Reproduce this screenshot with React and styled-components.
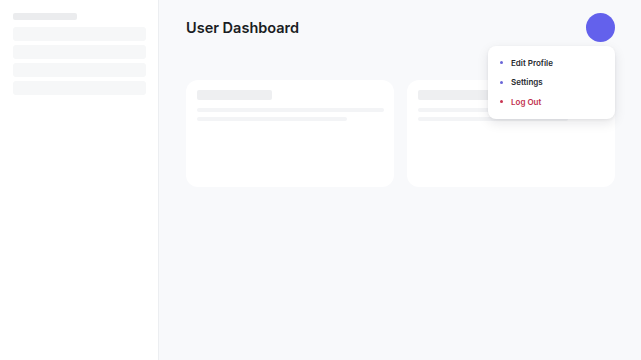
import React, { useState } from 'react';
import styled, { createGlobalStyle } from 'styled-components';

const GlobalStyle = createGlobalStyle`
  html, body {
    margin: 0;
    padding: 0;
    height: 100%;
  }
  body {
    font-family: Inter, "Noto Sans", sans-serif;
    background: #f8f9fb;
    color: #111827;
  }
  #root {
    height: 100%;
  }
`;

const Layout = styled.div`
  display: flex;
  height: 360px;
  width: 641px;
`;

const Sidebar = styled.aside`
  width: 159px;
  flex-shrink: 0;
  background: #ffffff;
  border-right: 1px solid #eceef1;
  padding: 13px 13px 0 13px;
  box-sizing: border-box;
  display: flex;
  flex-direction: column;
`;

const SkeletonBar = styled.div`
  width: ${(p) => p.$w || '100%'};
  height: ${(p) => p.$h || 14}px;
  background: ${(p) => p.$bg || '#f7f7f8'};
  border-radius: ${(p) => p.$r || 2}px;
  margin-bottom: ${(p) => p.$mb || 0}px;
`;

const NavList = styled.div`
  display: flex;
  flex-direction: column;
  gap: 4px;
  padding-top: 7px;
  width: 133px;
`;

const Main = styled.main`
  flex: 1;
  padding: 13px 26px 0 27px;
  box-sizing: border-box;
`;

const Header = styled.header`
  display: flex;
  align-items: center;
  justify-content: space-between;
  height: 29px;
`;

const Title = styled.h1`
  margin: 0;
  font-size: 14.5px;
  font-weight: 600;
  color: #1a1d23;
`;

const AvatarWrap = styled.div`
  position: relative;
`;

const Avatar = styled.button`
  width: 29px;
  height: 29px;
  border-radius: 50%;
  border: none;
  padding: 0;
  background: #6361ec;
  cursor: pointer;
  display: block;
`;

const Menu = styled.ul`
  position: absolute;
  top: 33px;
  right: 0;
  width: 127px;
  margin: 0;
  padding: 7px 0;
  list-style: none;
  background: #ffffff;
  border-radius: 8px;
  box-shadow: 0 4px 12px rgba(17, 24, 39, 0.1), 0 1px 3px rgba(17, 24, 39, 0.06);
  z-index: 10;
`;

const MenuItem = styled.li`
  display: flex;
  align-items: center;
  gap: 8px;
  height: 19.5px;
  padding: 0 12px;
  font-size: 8px;
  font-weight: 600;
  color: ${(p) => (p.$danger ? '#bf2f4e' : '#262930')};
  cursor: pointer;

  &::before {
    content: '';
    width: 3px;
    height: 3px;
    border-radius: 50%;
    background: ${(p) => (p.$danger ? '#c93452' : '#6a66d8')};
    flex-shrink: 0;
  }
`;

const CardGrid = styled.div`
  display: grid;
  grid-template-columns: 1fr 1fr;
  gap: 13px;
  margin-top: 38px;
`;

const Card = styled.div`
  background: #ffffff;
  border-radius: 12px;
  height: 107px;
  padding: 10px 10px 0 11px;
  box-sizing: border-box;
`;

const cards = [0, 1];
const navRows = [0, 1, 2, 3];

export default function App() {
  const [open, setOpen] = useState(true);

  return (
    <>
      <GlobalStyle />
      <Layout>
        <Sidebar>
          <SkeletonBar $w="64px" $h={7} $bg="#ebecee" />
          <NavList>
            {navRows.map((i) => (
              <SkeletonBar key={i} $h={14} $bg="#f6f7f8" $r={3} />
            ))}
          </NavList>
        </Sidebar>
        <Main>
          <Header>
            <Title>User Dashboard</Title>
            <AvatarWrap>
              <Avatar aria-label="Account" onClick={() => setOpen(!open)} />
              {open && (
                <Menu>
                  <MenuItem>Edit Profile</MenuItem>
                  <MenuItem>Settings</MenuItem>
                  <MenuItem $danger>Log Out</MenuItem>
                </Menu>
              )}
            </AvatarWrap>
          </Header>
          <CardGrid>
            {cards.map((i) => (
              <Card key={i}>
                <SkeletonBar $w="75px" $h={10} $bg="#eeeff1" $mb={8} />
                <SkeletonBar $w="100%" $h={4} $bg="#f3f4f6" $mb={5} />
                <SkeletonBar $w="80%" $h={4} $bg="#f3f4f6" />
              </Card>
            ))}
          </CardGrid>
        </Main>
      </Layout>
    </>
  );
}
